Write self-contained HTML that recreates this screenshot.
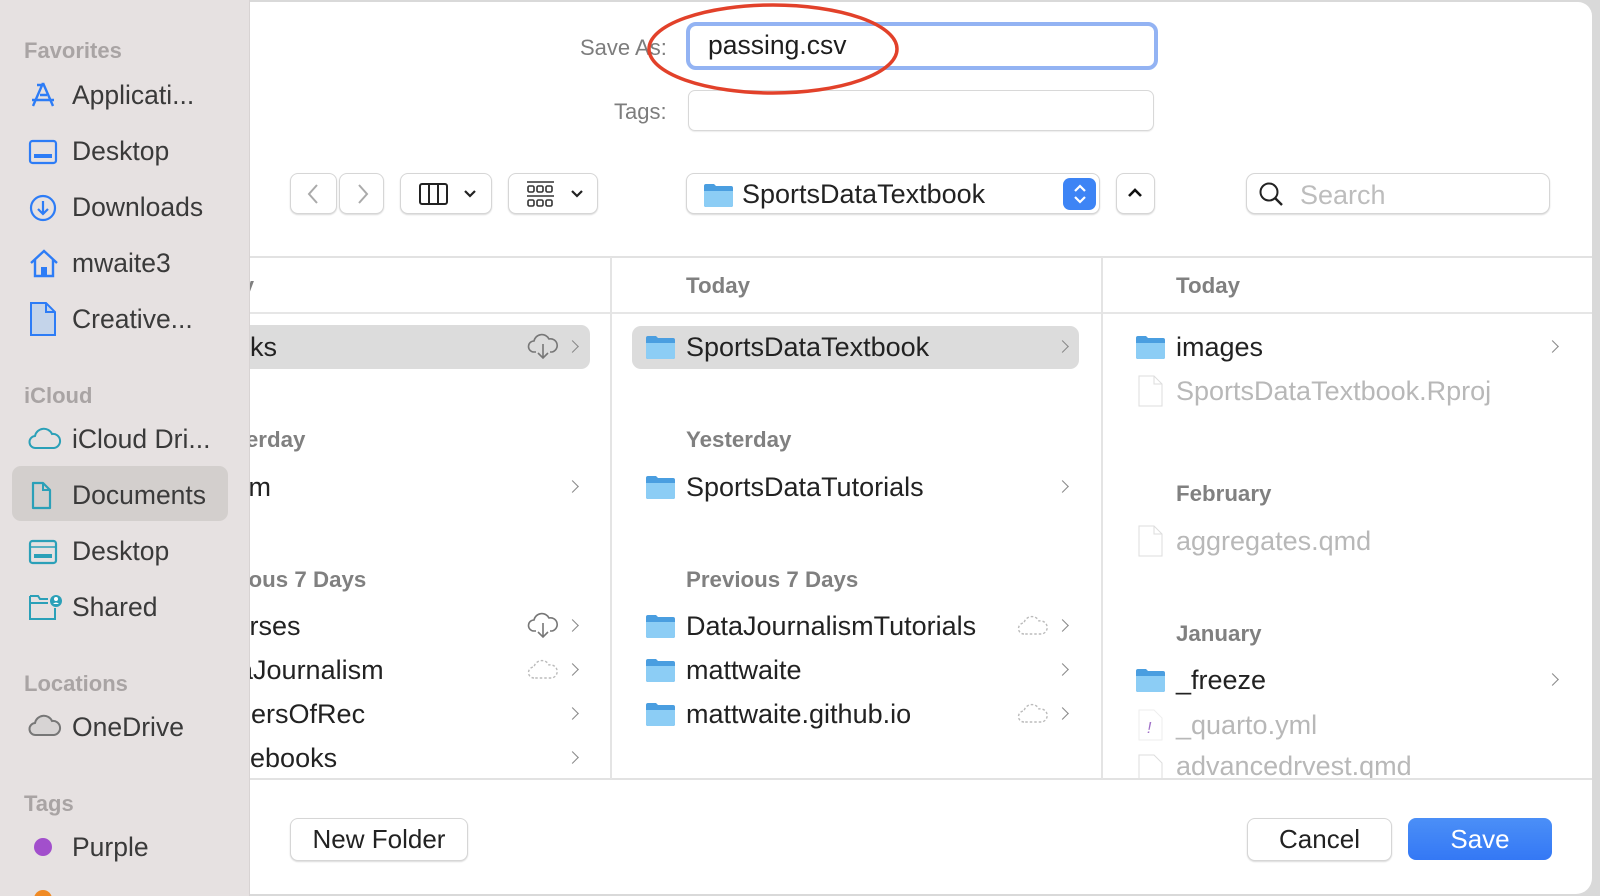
<!DOCTYPE html>
<html style="width:1600px;height:896px;overflow:hidden"><head><meta charset="utf-8"><style>
*{margin:0;padding:0;box-sizing:border-box}
body{width:1600px;height:896px;overflow:hidden;background:#d9d9d9;font-family:"Liberation Sans",sans-serif;position:relative}
.a{position:absolute;white-space:nowrap}
#win{position:absolute;left:0;top:2px;width:1592px;height:892px;background:#fff;border-radius:0 14px 16px 0;overflow:hidden}
#side{position:absolute;left:0;top:0;width:250px;height:896px;background:#e6e1e1;z-index:5;border-right:1px solid #d8d3d3;overflow:hidden}
.sh{font-size:22px;font-weight:bold;color:#a9a4a4;left:24px}
.si{font-size:26.5px;color:#3a3a3a;left:72px;line-height:30px;margin-top:-15px}
.ic{position:absolute;left:28px}
.t{font-size:27px;color:#222;line-height:30px;margin-top:-15px}
.g{color:#b8b8b8}
.h{font-size:22.3px;font-weight:bold;color:#808080;line-height:26px;margin-top:-13px}
.chev{position:absolute;width:9px;height:9px;border-right:1.8px solid #888;border-top:1.8px solid #888;transform:rotate(45deg);margin-top:-5px}
.btn{position:absolute;background:#fff;border:1px solid #d6d6d6;border-radius:8px;box-shadow:0 1px 1.5px rgba(0,0,0,.15)}
.fold{position:absolute;width:31px;height:25px;margin-top:-12px}
.file{position:absolute;width:25px;height:32px;margin-top:-16px}
</style></head><body>
<div id="win">
<div class="a" style="left:580px;top:33px;font-size:22px;color:#7d7d7d">Save As:</div>
<div class="a" style="left:686px;top:20px;width:472px;height:48px;border:4px solid #93b3f3;border-radius:10px;background:#fff"></div>
<div class="a" style="left:708px;top:28px;font-size:26.5px;color:#1e1e1e">passing.csv</div>
<div class="a" style="left:614px;top:97px;font-size:22px;color:#7d7d7d">Tags:</div>
<div class="a" style="left:688px;top:88px;width:466px;height:41px;border:1px solid #d8d8d8;border-radius:7px;box-shadow:0 1px 1px rgba(0,0,0,.08)"></div>
<div class="btn" style="left:290px;top:171px;width:47px;height:41px"></div>
<svg class="a" style="left:306px;top:181px" width="16" height="22"><path d="M11 2L3 11L11 20" fill="none" stroke="#aaa" stroke-width="2"/></svg>
<div class="btn" style="left:339px;top:171px;width:45px;height:41px"></div>
<svg class="a" style="left:355px;top:181px" width="16" height="22"><path d="M4 2L12 11L4 20" fill="none" stroke="#aaa" stroke-width="2"/></svg>
<div class="btn" style="left:400px;top:171px;width:92px;height:41px"></div>
<svg class="a" style="left:418px;top:180px" width="60" height="24"><rect x="2" y="2" width="27" height="20" rx="2" fill="none" stroke="#222" stroke-width="2"/><line x1="11" y1="2" x2="11" y2="22" stroke="#222" stroke-width="2"/><line x1="20" y1="2" x2="20" y2="22" stroke="#222" stroke-width="2"/><path d="M47 9L52 14L57 9" fill="none" stroke="#222" stroke-width="2.2"/></svg>
<div class="btn" style="left:508px;top:171px;width:90px;height:41px"></div>
<svg class="a" style="left:526px;top:178px" width="62" height="28"><line x1="1" y1="2" x2="28" y2="2" stroke="#333" stroke-width="1.5"/><line x1="1" y1="16" x2="28" y2="16" stroke="#333" stroke-width="1.5"/><g fill="none" stroke="#333" stroke-width="1.6"><rect x="2" y="6" width="6" height="6" rx="1.5"/><rect x="11" y="6" width="6" height="6" rx="1.5"/><rect x="20" y="6" width="6" height="6" rx="1.5"/><rect x="2" y="20" width="6" height="6" rx="1.5"/><rect x="11" y="20" width="6" height="6" rx="1.5"/><rect x="20" y="20" width="6" height="6" rx="1.5"/></g><path d="M46 11L51 16L56 11" fill="none" stroke="#222" stroke-width="2.2"/></svg>
<div class="btn" style="left:686px;top:171px;width:414px;height:41px"></div>
<svg class="fold" style="left:703px;top:193px" viewBox="0 0 31 25"><path d="M1 3Q1 1 3 1H11L13 3H28Q30 3 30 5V22Q30 24 28 24H3Q1 24 1 22Z" fill="#4a9ee0"/><path d="M1 8H30V22Q30 24 28 24H3Q1 24 1 22Z" fill="#8ccdf5"/></svg>
<div class="a t" style="left:742px;top:192px">SportsDataTextbook</div>
<div class="a" style="left:1063px;top:176px;width:33px;height:32px;background:#3d84f5;border-radius:7px"></div>
<svg class="a" style="left:1071px;top:179px" width="18" height="26"><path d="M4 10L9 5L14 10M4 16L9 21L14 16" fill="none" stroke="#fff" stroke-width="2.2"/></svg>
<div class="btn" style="left:1116px;top:171px;width:39px;height:41px"></div>
<svg class="a" style="left:1126px;top:184px" width="18" height="14"><path d="M3 10L9 4L15 10" fill="none" stroke="#111" stroke-width="2.6"/></svg>
<div class="btn" style="left:1246px;top:171px;width:304px;height:41px;border-radius:9px"></div>
<svg class="a" style="left:1258px;top:179px" width="28" height="28"><circle cx="11" cy="11" r="8.5" fill="none" stroke="#222" stroke-width="2"/><line x1="17" y1="17" x2="24" y2="24" stroke="#222" stroke-width="2.4"/></svg>
<div class="a" style="left:1300px;top:178px;font-size:27px;color:#bdbdbd">Search</div>
<div class="a" style="left:0;top:254px;width:1592px;height:1.5px;background:#e2e2e2"></div>
<div class="a" style="left:0;top:310px;width:1592px;height:1.5px;background:#e6e6e6"></div>
<div class="a" style="left:0;top:776px;width:1592px;height:2px;background:#e2e2e2"></div>
<div class="a" style="left:610px;top:255px;width:1.5px;height:522px;background:#e4e4e4"></div>
<div class="a" style="left:1101px;top:255px;width:1.5px;height:522px;background:#e4e4e4"></div>
<!-- col1 -->
<div class="a h" style="left:190px;top:284px">Today</div>
<div class="a" style="left:150px;top:323px;width:440px;height:44px;background:#dcdcdc;border-radius:9px"></div>
<div class="a t" style="left:202px;top:345px">Books</div>
<svg class="a" style="left:527px;top:331px" width="32" height="28"><path d="M9 19H7A5.5 5.5 0 0 1 7 8A8 8 0 0 1 22 6A6 6 0 0 1 25 19H23" fill="none" stroke="#777" stroke-width="1.6"/><path d="M16 11V25M11 20L16 25L21 20" fill="none" stroke="#777" stroke-width="1.6"/></svg>
<div class="chev" style="left:568px;top:345px"></div>
<div class="a h" style="left:200px;top:438px">Yesterday</div>
<div class="a t" style="left:229px;top:485px">Hm</div><div class="chev" style="left:568px;top:485px"></div>
<div class="a h" style="left:194px;top:578px">Previous 7 Days</div>
<div class="a t" style="left:200px;top:624px">Courses</div>
<svg class="a" style="left:527px;top:610px" width="32" height="28"><path d="M9 19H7A5.5 5.5 0 0 1 7 8A8 8 0 0 1 22 6A6 6 0 0 1 25 19H23" fill="none" stroke="#777" stroke-width="1.6"/><path d="M16 11V25M11 20L16 25L21 20" fill="none" stroke="#777" stroke-width="1.6"/></svg>
<div class="chev" style="left:568px;top:624px"></div>
<div class="a t" style="left:196px;top:668px">DataJournalism</div>
<svg class="a" style="left:527px;top:656px" width="32" height="24"><path d="M7 20A5.5 5.5 0 0 1 7 9A8 8 0 0 1 22 7A6 6 0 0 1 25 20Z" fill="none" stroke="#bbb" stroke-width="1.4" stroke-dasharray="2.5 2"/></svg>
<div class="chev" style="left:568px;top:668px"></div>
<div class="a t" style="left:203px;top:712px">PapersOfRec</div><div class="chev" style="left:568px;top:712px"></div>
<div class="a t" style="left:208px;top:756px">Notebooks</div><div class="chev" style="left:568px;top:756px"></div>
<!-- col2 -->
<div class="a h" style="left:686px;top:284px">Today</div>
<div class="a" style="left:632px;top:324px;width:447px;height:43px;background:#dcdcdc;border-radius:9px"></div>
<svg class="fold" style="left:645px;top:345px" viewBox="0 0 31 25"><path d="M1 3Q1 1 3 1H11L13 3H28Q30 3 30 5V22Q30 24 28 24H3Q1 24 1 22Z" fill="#4a9ee0"/><path d="M1 8H30V22Q30 24 28 24H3Q1 24 1 22Z" fill="#8ccdf5"/></svg>
<div class="a t" style="left:686px;top:345px">SportsDataTextbook</div><div class="chev" style="left:1058px;top:345px"></div>
<div class="a h" style="left:686px;top:438px">Yesterday</div>
<svg class="fold" style="left:645px;top:485px" viewBox="0 0 31 25"><path d="M1 3Q1 1 3 1H11L13 3H28Q30 3 30 5V22Q30 24 28 24H3Q1 24 1 22Z" fill="#4a9ee0"/><path d="M1 8H30V22Q30 24 28 24H3Q1 24 1 22Z" fill="#8ccdf5"/></svg>
<div class="a t" style="left:686px;top:485px">SportsDataTutorials</div><div class="chev" style="left:1058px;top:485px"></div>
<div class="a h" style="left:686px;top:578px">Previous 7 Days</div>
<svg class="fold" style="left:645px;top:624px" viewBox="0 0 31 25"><path d="M1 3Q1 1 3 1H11L13 3H28Q30 3 30 5V22Q30 24 28 24H3Q1 24 1 22Z" fill="#4a9ee0"/><path d="M1 8H30V22Q30 24 28 24H3Q1 24 1 22Z" fill="#8ccdf5"/></svg>
<div class="a t" style="left:686px;top:624px">DataJournalismTutorials</div>
<svg class="a" style="left:1017px;top:612px" width="32" height="24"><path d="M7 20A5.5 5.5 0 0 1 7 9A8 8 0 0 1 22 7A6 6 0 0 1 25 20Z" fill="none" stroke="#bbb" stroke-width="1.4" stroke-dasharray="2.5 2"/></svg>
<div class="chev" style="left:1058px;top:624px"></div>
<svg class="fold" style="left:645px;top:668px" viewBox="0 0 31 25"><path d="M1 3Q1 1 3 1H11L13 3H28Q30 3 30 5V22Q30 24 28 24H3Q1 24 1 22Z" fill="#4a9ee0"/><path d="M1 8H30V22Q30 24 28 24H3Q1 24 1 22Z" fill="#8ccdf5"/></svg>
<div class="a t" style="left:686px;top:668px">mattwaite</div><div class="chev" style="left:1058px;top:668px"></div>
<svg class="fold" style="left:645px;top:712px" viewBox="0 0 31 25"><path d="M1 3Q1 1 3 1H11L13 3H28Q30 3 30 5V22Q30 24 28 24H3Q1 24 1 22Z" fill="#4a9ee0"/><path d="M1 8H30V22Q30 24 28 24H3Q1 24 1 22Z" fill="#8ccdf5"/></svg>
<div class="a t" style="left:686px;top:712px">mattwaite.github.io</div>
<svg class="a" style="left:1017px;top:700px" width="32" height="24"><path d="M7 20A5.5 5.5 0 0 1 7 9A8 8 0 0 1 22 7A6 6 0 0 1 25 20Z" fill="none" stroke="#bbb" stroke-width="1.4" stroke-dasharray="2.5 2"/></svg>
<div class="chev" style="left:1058px;top:712px"></div>
<!-- col3 -->
<div class="a h" style="left:1176px;top:284px">Today</div>
<svg class="fold" style="left:1135px;top:345px" viewBox="0 0 31 25"><path d="M1 3Q1 1 3 1H11L13 3H28Q30 3 30 5V22Q30 24 28 24H3Q1 24 1 22Z" fill="#4a9ee0"/><path d="M1 8H30V22Q30 24 28 24H3Q1 24 1 22Z" fill="#8ccdf5"/></svg>
<div class="a t" style="left:1176px;top:345px">images</div><div class="chev" style="left:1548px;top:345px"></div>
<svg class="file" style="left:1138px;top:389px" viewBox="0 0 25 32"><path d="M1 1H16L24 9V31H1Z" fill="#fff" stroke="#ddd"/><path d="M16 1V9H24" fill="none" stroke="#ddd"/></svg>
<div class="a t g" style="left:1176px;top:389px">SportsDataTextbook.Rproj</div>
<div class="a h" style="left:1176px;top:492px">February</div>
<svg class="file" style="left:1138px;top:539px" viewBox="0 0 25 32"><path d="M1 1H16L24 9V31H1Z" fill="#fff" stroke="#ddd"/><path d="M16 1V9H24" fill="none" stroke="#ddd"/></svg>
<div class="a t g" style="left:1176px;top:539px">aggregates.qmd</div>
<div class="a h" style="left:1176px;top:632px">January</div>
<svg class="fold" style="left:1135px;top:678px" viewBox="0 0 31 25"><path d="M1 3Q1 1 3 1H11L13 3H28Q30 3 30 5V22Q30 24 28 24H3Q1 24 1 22Z" fill="#4a9ee0"/><path d="M1 8H30V22Q30 24 28 24H3Q1 24 1 22Z" fill="#8ccdf5"/></svg>
<div class="a t" style="left:1176px;top:678px">_freeze</div><div class="chev" style="left:1548px;top:678px"></div>
<svg class="file" style="left:1138px;top:723px" viewBox="0 0 25 32"><path d="M1 1H16L24 9V31H1Z" fill="#fff" stroke="#eee"/><text x="9" y="24" font-size="16" fill="#a070c8" font-style="italic" font-family="Liberation Sans">!</text></svg>
<div class="a t g" style="left:1176px;top:723px">_quarto.yml</div>
<div class="a" style="left:1104px;top:750px;width:480px;height:26px;overflow:hidden">
<svg class="a" style="left:34px;top:2px" width="25" height="32" viewBox="0 0 25 32"><path d="M1 1H16L24 9V31H1Z" fill="#fff" stroke="#ddd"/></svg>
<div class="a" style="left:72px;top:-1px;font-size:27px;color:#b8b8b8">advancedrvest.qmd</div></div>
<div class="btn" style="left:290px;top:816px;width:178px;height:43px"></div>
<div class="a" style="left:290px;top:822px;width:178px;text-align:center;font-size:26px;color:#222">New Folder</div>
<div class="btn" style="left:1247px;top:816px;width:145px;height:43px"></div>
<div class="a" style="left:1247px;top:822px;width:145px;text-align:center;font-size:26px;color:#222">Cancel</div>
<div class="a" style="left:1408px;top:816px;width:144px;height:42px;border-radius:8px;background:linear-gradient(#4b8ff7,#3478f5)"></div>
<div class="a" style="left:1408px;top:822px;width:144px;text-align:center;font-size:26px;color:#fff">Save</div>
<svg class="a" style="left:640px;top:0" width="270" height="100"><ellipse cx="133" cy="47" rx="124" ry="44" fill="none" stroke="#e2412a" stroke-width="3.5"/></svg>
</div>
<div id="side">
<div class="a sh" style="top:38px">Favorites</div>
<svg class="ic" style="top:80px" width="30" height="30"><path d="M15 3L5 26M15 3L25 26M9 5L16 5M4 20H26M12 15L19 15" fill="none" stroke="#2d7cf6" stroke-width="2.4"/></svg>
<div class="a si" style="top:95px">Applicati...</div>
<svg class="ic" style="top:138px" width="32" height="28"><rect x="2" y="3" width="26" height="22" rx="2.5" fill="none" stroke="#2d7cf6" stroke-width="2.2"/><rect x="6" y="16" width="18" height="4" fill="#2d7cf6"/></svg>
<div class="a si" style="top:151px">Desktop</div>
<svg class="ic" style="top:193px" width="30" height="30"><circle cx="15" cy="15" r="12" fill="none" stroke="#2d7cf6" stroke-width="2.2"/><path d="M15 8V21M10 16L15 21L20 16" fill="none" stroke="#2d7cf6" stroke-width="2.2"/></svg>
<div class="a si" style="top:207px">Downloads</div>
<svg class="ic" style="top:248px" width="32" height="30"><path d="M3 15L16 3L29 15M7 12V28H25V12" fill="none" stroke="#2d7cf6" stroke-width="2.4"/><rect x="13" y="19" width="6" height="9" fill="#2d7cf6"/></svg>
<div class="a si" style="top:263px">mwaite3</div>
<svg class="ic" style="top:301px" width="30" height="36"><path d="M3 2H18L27 11V34H3Z" fill="#c4d4ea" stroke="#2d7cf6" stroke-width="2"/><path d="M18 2V11H27" fill="none" stroke="#2d7cf6" stroke-width="2"/></svg>
<div class="a si" style="top:319px">Creative...</div>
<div class="a sh" style="top:383px">iCloud</div>
<svg class="ic" style="top:427px" width="34" height="24"><path d="M8 21A6 6 0 0 1 7 9A9 9 0 0 1 24 7A7 7 0 0 1 26 21Z" fill="none" stroke="#2ba0b8" stroke-width="2"/></svg>
<div class="a si" style="top:439px">iCloud Dri...</div>
<div class="a" style="left:12px;top:466px;width:216px;height:55px;background:#d3cfcd;border-radius:9px"></div>
<svg class="ic" style="top:481px" width="30" height="30"><path d="M5 2H15L22 9V27H5Z" fill="none" stroke="#2ba0b8" stroke-width="2.2" stroke-linejoin="round"/><path d="M15 2V9H22" fill="none" stroke="#2ba0b8" stroke-width="2"/></svg>
<div class="a si" style="top:495px">Documents</div>
<svg class="ic" style="top:538px" width="32" height="28"><rect x="2" y="3" width="26" height="22" rx="2.5" fill="none" stroke="#2ba0b8" stroke-width="2.2"/><line x1="2" y1="9" x2="28" y2="9" stroke="#2ba0b8" stroke-width="1.5"/><rect x="6" y="16" width="18" height="4" fill="#2ba0b8"/></svg>
<div class="a si" style="top:551px">Desktop</div>
<svg class="ic" style="top:592px" width="36" height="30"><path d="M2 4H10L12 7H20M2 4V27H27V16M2 11H20" fill="none" stroke="#2ba0b8" stroke-width="2"/><circle cx="28" cy="9" r="6" fill="#2ba0b8"/><circle cx="28" cy="7" r="2" fill="#fff"/><path d="M25 12Q28 9 31 12" fill="#fff"/></svg>
<div class="a si" style="top:607px">Shared</div>
<div class="a sh" style="top:671px">Locations</div>
<svg class="ic" style="top:714px" width="34" height="24"><path d="M8 21A6 6 0 0 1 7 9A9 9 0 0 1 24 7A7 7 0 0 1 26 21Z" fill="#d7d4d4" stroke="#777" stroke-width="2"/></svg>
<div class="a si" style="top:727px">OneDrive</div>
<div class="a sh" style="top:791px">Tags</div>
<div class="a" style="left:34px;top:838px;width:18px;height:18px;border-radius:50%;background:#a24fcc"></div>
<div class="a si" style="top:847px">Purple</div>
<div class="a" style="left:34px;top:890px;width:18px;height:18px;border-radius:50%;background:#f08a24"></div>
<div class="a si" style="top:906px">Orange</div>
</div>
</body></html>
